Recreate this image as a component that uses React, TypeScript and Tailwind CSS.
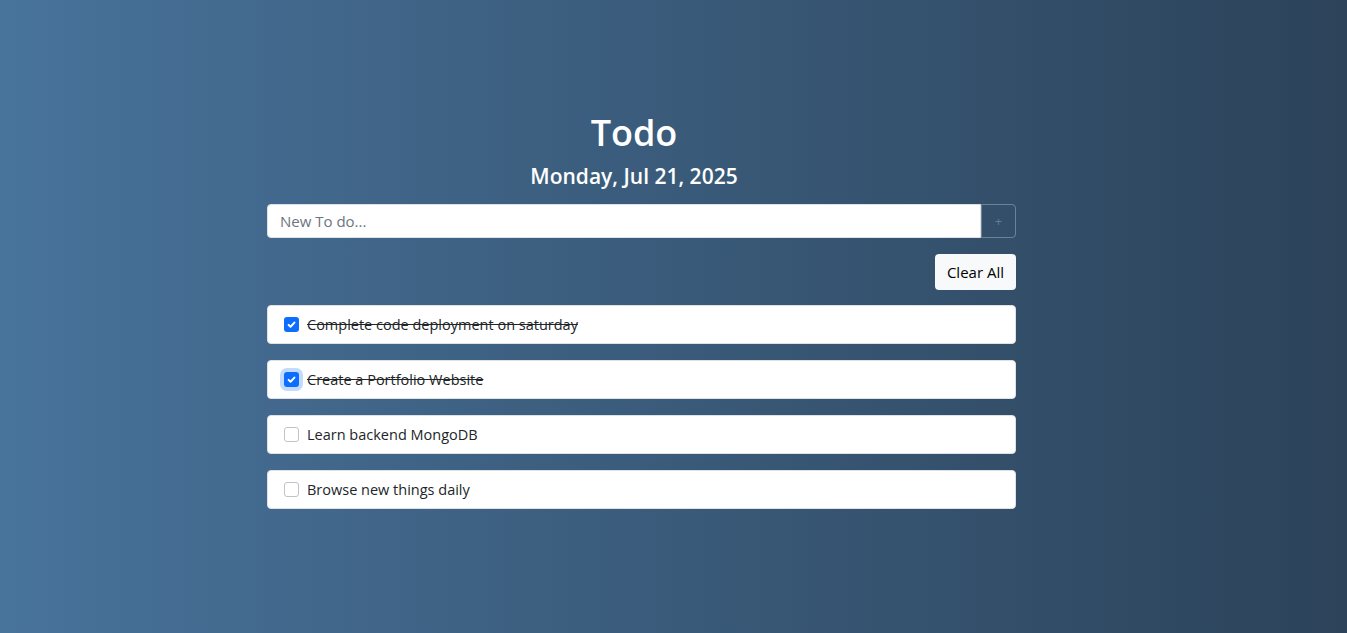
import React from "react";

const todos = [
  { text: "Complete code deployment on saturday", done: true, focus: false },
  { text: "Create a Portfolio Website", done: true, focus: true },
  { text: "Learn backend MongoDB", done: false, focus: false },
  { text: "Browse new things daily", done: false, focus: false },
];

function Check({ done, focus }: { done: boolean; focus: boolean }) {
  if (done) {
    return (
      <span
        className={
          "flex h-[15px] w-[15px] shrink-0 items-center justify-center rounded-[3px] bg-[#0d6efd] " +
          (focus ? "shadow-[0_0_0_4px_rgba(13,110,253,0.25)]" : "")
        }
      >
        <svg width="13" height="13" viewBox="0 0 20 20">
          <path
            d="M5.5 10.5l3 3 6-6.5"
            fill="none"
            stroke="#fff"
            strokeWidth="3"
            strokeLinecap="round"
            strokeLinejoin="round"
          />
        </svg>
      </span>
    );
  }
  return <span className="h-[15px] w-[15px] shrink-0 rounded-[3px] border border-[#bfc4c9] bg-white" />;
}

export default function App() {
  return (
    <div
      className="flex min-h-screen flex-col items-center bg-gradient-to-r from-[#48739b] to-[#2c435a] pr-[64px] pt-[109px] text-[#212529]"
      style={{ fontFamily: '"Open Sans", "Noto Sans", sans-serif' }}
    >
      <div className="w-[749px]">
        <h1 className="pr-[15px] text-center text-[36px] font-semibold leading-[48px] text-white">Todo</h1>
        <h2 className="mt-[6px] pr-[15px] text-center text-[21px] font-semibold leading-[26px] text-white">
          Monday, Jul 21, 2025
        </h2>
        <div className="mt-[15px] flex h-[34px]">
          <input
            className="h-full flex-1 rounded-l-[4px] border border-[#dee2e6] bg-white px-3 text-[15px] text-[#212529] outline-none placeholder:text-[#6c757d]"
            placeholder="New To do..."
          />
          <button className="flex h-full w-[35px] items-center justify-center rounded-r-[4px] border border-[rgba(222,226,230,0.35)] text-[13px] leading-none text-[rgba(255,255,255,0.25)]">
            +
          </button>
        </div>
        <div className="mt-[16px] flex justify-end">
          <button className="h-[36px] rounded-[4px] bg-[#f8f9fa] px-[12px] text-[15px] text-black">Clear All</button>
        </div>
        <div className="mt-[15px] flex flex-col gap-[16px]">
          {todos.map((t, i) => (
            <div
              key={i}
              className="flex h-[39px] items-center gap-[8px] rounded-[4px] border border-[#dee2e6] bg-white px-[16px]"
            >
              <Check done={t.done} focus={t.focus} />
              <span className={"text-[14.5px] text-[#212529] " + (t.done ? "line-through" : "")}>{t.text}</span>
            </div>
          ))}
        </div>
      </div>
    </div>
  );
}
